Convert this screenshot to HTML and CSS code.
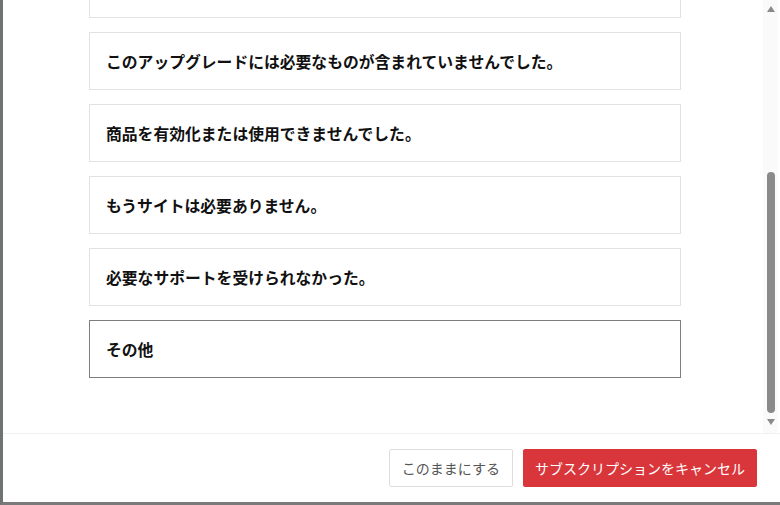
FILE: index.html
```html
<!DOCTYPE html>
<html lang="ja">
<head>
    <meta charset="UTF-8">
    <meta name="viewport" content="width=device-width, initial-scale=1.0">
    <title>サブスクリプションのキャンセル</title>
    <link rel="stylesheet" href="styles.css">
</head>
<body>
    <div class="modal">
        <div class="body">
            <div class="scroll">
                <div class="reasons">
                    <div class="reason"></div>
                    <div class="reason">このアップグレードには必要なものが含まれていませんでした。</div>
                    <div class="reason">商品を有効化または使用できませんでした。</div>
                    <div class="reason">もうサイトは必要ありません。</div>
                    <div class="reason">必要なサポートを受けられなかった。</div>
                    <div class="reason active">その他</div>
                </div>
            </div>
            <div class="scrollbar">
                <span class="arrow up"></span>
                <div class="track"><div class="thumb"></div></div>
                <span class="arrow down"></span>
            </div>
        </div>
        <div class="footer">
            <button class="btn keep">このままにする</button>
            <button class="btn cancel">サブスクリプションをキャンセル</button>
        </div>
    </div>
</body>
</html>
```

FILE: styles.css
```css
html, body {
    margin: 0;
    height: 100%;
}
body {
    font-family: "Noto Sans CJK JP", "Noto Sans", sans-serif;
    background-color: #ffffff;
}
.modal {
    height: 505px;
    box-sizing: border-box;
    border-left: 3px solid #707373;
    border-bottom: 3px solid #7a7a7a;
    display: flex;
    flex-direction: column;
}
.body {
    height: 433px;
    display: flex;
    overflow: hidden;
    border-bottom: 1px solid #f0f0f0;
}
.scroll {
    flex: 1;
    overflow: hidden;
    padding-left: 86px;
}
.reasons {
    width: 592px;
    margin-top: -40px;
    display: flex;
    flex-direction: column;
    gap: 14px;
}
.reason {
    height: 58px;
    box-sizing: border-box;
    border: 1px solid #e2e2e2;
    padding: 0 16px;
    display: flex;
    align-items: center;
    font-size: 15.8px;
    font-weight: bold;
    color: #111111;
}
.reason.active {
    border-color: #7d7d7d;
}
.scrollbar {
    width: 15px;
    margin-right: 2px;
    background-color: #fafafa;
    display: flex;
    flex-direction: column;
    align-items: center;
    padding: 6px 0 8px;
}
.arrow {
    width: 0;
    height: 0;
    border-left: 4px solid transparent;
    border-right: 4px solid transparent;
}
.arrow.up {
    border-bottom: 6px solid #8a8a8a;
}
.arrow.down {
    border-top: 6px solid #8a8a8a;
}
.track {
    flex: 1;
    width: 8px;
    padding: 160px 0 6px;
    display: flex;
}
.thumb {
    flex: 1;
    background-color: #8a8a8a;
    border-radius: 4px;
}
.footer {
    flex: 1;
    display: flex;
    justify-content: flex-end;
    align-items: flex-start;
    gap: 10px;
    padding: 15px 23px 0 0;
}
.btn {
    height: 38px;
    font-family: "Noto Sans CJK JP", "Noto Sans", sans-serif;
    font-size: 14px;
    border-radius: 2px;
    cursor: pointer;
}
.keep {
    background-color: #ffffff;
    color: #555555;
    border: 1px solid #dddddd;
    padding: 0 12px;
}
.cancel {
    background-color: #d9363b;
    color: #ffffff;
    border: 1px solid #d9363b;
    padding: 0 11px;
}
```
